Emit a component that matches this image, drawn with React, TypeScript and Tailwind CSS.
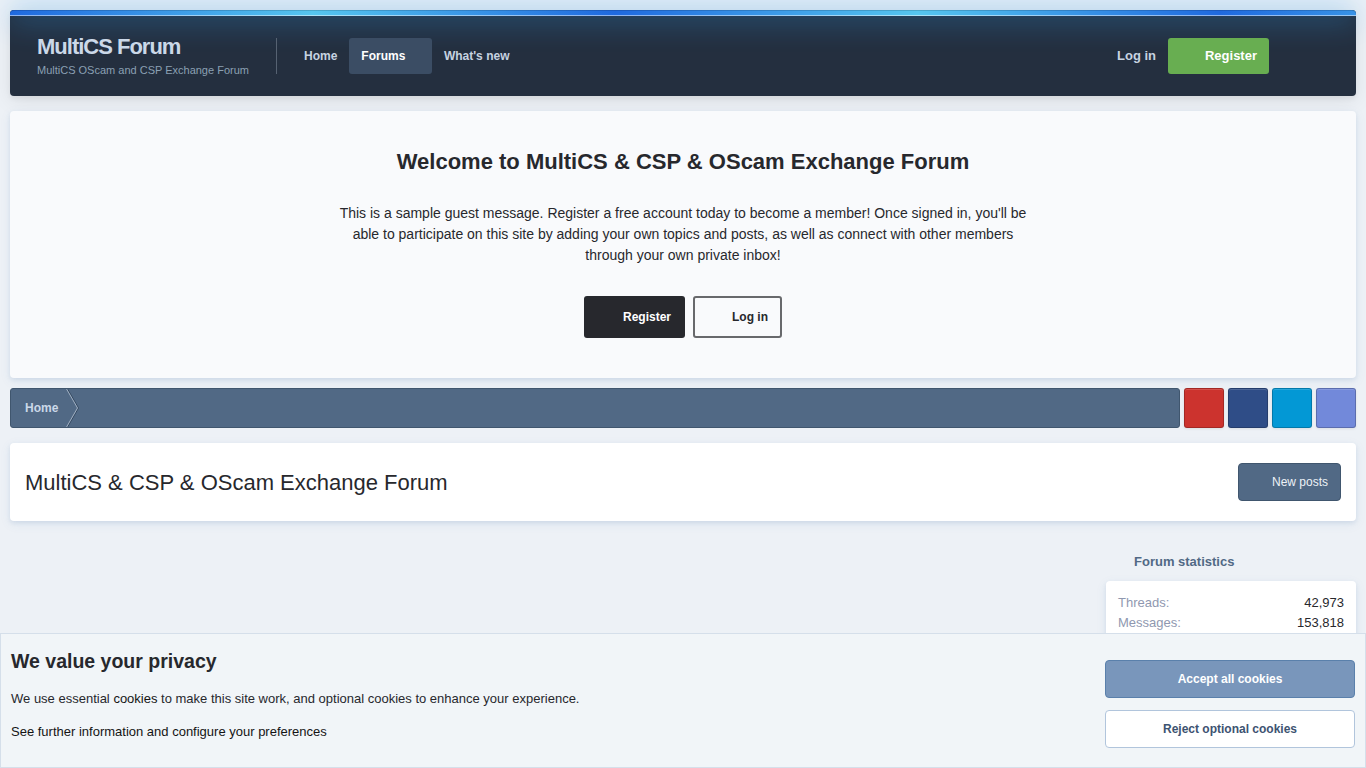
import clsx from "clsx";

const navItems = [
  { label: "Home", active: false },
  { label: "Forums", active: true },
  { label: "What's new", active: false },
];

const shareLinks = [
  { name: "Google", color: "bg-[#cc332e]" },
  { name: "Facebook", color: "bg-[#2f4d87]" },
  { name: "Twitter", color: "bg-[#0398d5]" },
  { name: "Discord", color: "bg-[#7289da]" },
];

const stats = [
  { label: "Threads:", value: "42,973" },
  { label: "Messages:", value: "153,818" },
];

const cardShadow =
  "shadow-[0_2px_4px_rgba(60,110,165,0.12),0_3px_12px_rgba(60,110,165,0.08)]";

function Header() {
  return (
    <header className="rounded bg-[#242f3f] shadow-[0_3px_5px_rgba(0,0,0,0.05),0_5px_20px_rgba(0,0,0,0.08)]">
      <div className="h-1.5 rounded-t border-t border-b border-t-black/15 border-b-white/50 bg-[linear-gradient(90deg,#1f69df,#56c6ef,#1f69df)] bg-[length:605px_100%] bg-origin-border shadow-[0_0_30px_#2f9ff0]" />
      <div className="relative flex h-20 items-center pr-[87px] pl-[27px]">
        <div className="w-[239px]">
          <div className="text-[22px] leading-[26px] font-bold tracking-[-1px] text-[#cbd8e8]">
            MultiCS Forum
          </div>
          <div className="mt-0.5 text-[11px] leading-4 text-[#8ba0b3]">
            MultiCS OScam and CSP Exchange Forum
          </div>
        </div>
        <div className="mr-[15px] h-9 w-px bg-[#566272]" />
        <nav className="flex">
          {navItems.map((item) => (
            <a
              key={item.label}
              className={clsx(
                "flex h-9 items-center rounded-[3px] pl-3 text-[12px] font-bold",
                item.active
                  ? "w-[82.6px] bg-[#3b4d64] text-white"
                  : "pr-3 text-[#c7d3e1]"
              )}
            >
              {item.label}
            </a>
          ))}
        </nav>
        <div className="ml-auto flex items-center text-[13px] font-bold">
          <a className="px-3 text-[#c7d3e1]">Log in</a>
          <a className="flex h-9 w-[101px] items-center justify-end rounded-[3px] bg-[#68ae51] pr-3 text-white">
            Register
          </a>
        </div>
      </div>
    </header>
  );
}

function Welcome() {
  return (
    <section
      className={clsx(
        "relative mt-[15px] flex h-[267px] flex-col items-center rounded bg-[#f9fafc] text-[#27282d]",
        cardShadow
      )}
    >
      <h2 className="mt-[34px] text-[22px] leading-[33px] font-bold">
        Welcome to MultiCS &amp; CSP &amp; OScam Exchange Forum
      </h2>
      <p className="mt-[25px] w-[700px] text-center text-[14px] leading-[21px]">
        This is a sample guest message. Register a free account today to become
        a member! Once signed in, you'll be able to participate on this site by
        adding your own topics and posts, as well as connect with other members
        through your own private inbox!
      </p>
      <div className="mt-[30px] flex gap-2 text-[12px] font-bold">
        <a className="flex h-[42px] w-[101px] items-center justify-end rounded-[3px] bg-[#27282d] pr-3.5 text-white">
          Register
        </a>
        <a className="flex h-[42px] w-[89px] items-center justify-end rounded-[3px] border-2 border-[#68696c] pr-3">
          Log in
        </a>
      </div>
    </section>
  );
}

function Breadcrumb() {
  return (
    <div className="relative mt-2.5 flex h-10 gap-1">
      <div className="flex flex-1 overflow-hidden rounded-[3px] border border-[#40566e] bg-[#516985] pl-3.5">
        <a className="flex items-center text-[12px] font-bold text-[#cbd8e8]">
          Home
        </a>
        <svg className="ml-[7px] h-[38px] w-4" viewBox="0 0 16 38" fill="none">
          <path d="M2 -1 13.5 19 2 39" stroke="#34485f" />
          <path d="M1 -1 12.5 19 1 39" stroke="#a0b0c2" />
        </svg>
      </div>
      {shareLinks.map((link) => (
        <a
          key={link.name}
          aria-label={link.name}
          className={clsx(
            "w-10 rounded-[3px] border border-black/20 shadow-[inset_0_1px_0_rgba(255,255,255,0.15),0_1px_3px_rgba(0,0,0,0.08)]",
            link.color
          )}
        />
      ))}
    </div>
  );
}

function Statistics() {
  return (
    <aside className="mt-[31px] ml-auto w-[250px]">
      <h3 className="pl-7 text-[13px] leading-5 font-bold text-[#516985]">
        Forum statistics
      </h3>
      <dl
        className={clsx(
          "mt-[9px] h-40 rounded bg-white px-3 pt-3 text-[13px] leading-5",
          cardShadow
        )}
      >
        {stats.map((row) => (
          <div key={row.label} className="flex justify-between">
            <dt className="text-[#8f98b0]">{row.label}</dt>
            <dd className="text-[#27282d]">{row.value}</dd>
          </div>
        ))}
      </dl>
    </aside>
  );
}

function CookieNotice() {
  return (
    <div className="fixed inset-x-0 bottom-0 flex h-[135px] justify-between border border-[#d5dfea] bg-[#f1f5f8] px-2.5 text-[13px] text-[#27282d]">
      <div>
        <h2 className="mt-3 text-[19.5px] leading-[30px] font-bold">
          We value your privacy
        </h2>
        <p className="mt-[13px] leading-5">
          We use essential <a className="text-[#141414]">cookies</a> to make this
          site work, and optional cookies to enhance your experience.
        </p>
        <p className="mt-[13px] leading-5 text-[#141414]">
          See further information and configure your preferences
        </p>
      </div>
      <div className="mt-[26px] flex w-[250px] flex-col gap-3 text-[12px] font-bold">
        <button className="h-[38px] rounded border border-[#5a80ab] bg-[#7996bb] text-white">
          Accept all cookies
        </button>
        <button className="h-[38px] rounded border border-[#b1c5dc] bg-white text-[#3d5371]">
          Reject optional cookies
        </button>
      </div>
    </div>
  );
}

export default function App() {
  return (
    <div className="h-screen overflow-hidden bg-[#edf1f6] p-2.5 font-['Liberation_Sans',Arial,sans-serif]">
      <Header />
      <Welcome />
      <Breadcrumb />
      <div
        className={clsx(
          "mt-[15px] flex h-[78px] items-center justify-between rounded bg-white px-[15px]",
          cardShadow
        )}
      >
        <h1 className="text-[22px] text-[#27282d]">
          MultiCS &amp; CSP &amp; OScam Exchange Forum
        </h1>
        <a className="flex h-[38px] w-[103px] items-center justify-end rounded border border-[#40566e] bg-[#516985] pr-3 text-[12px] text-[#edf2f7]">
          New posts
        </a>
      </div>
      <Statistics />
      <CookieNotice />
    </div>
  );
}
